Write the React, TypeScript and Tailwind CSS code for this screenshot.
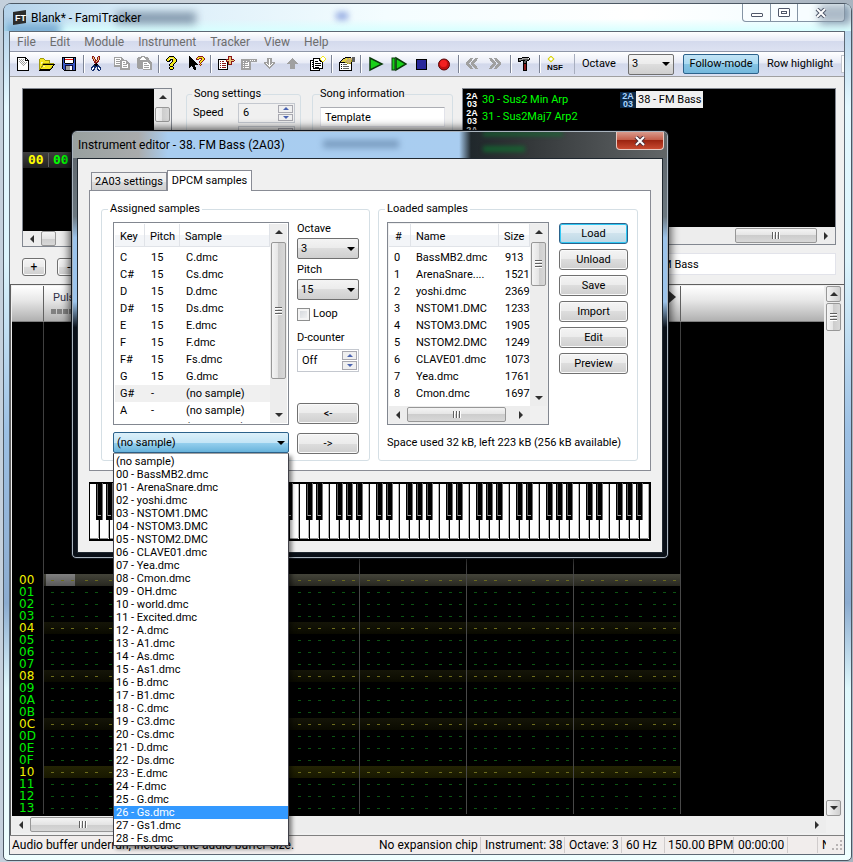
import { useState } from "react";
import type { ReactNode } from "react";
import clsx from "clsx";

const PALETTE: Record<string, string> = {
  k: "#000000",
  w: "#ffffff",
  g: "#a0a0a0",
  d: "#606060",
  y: "#f4e820",
  o: "#a09a10",
  c: "#f8f4b0",
  r: "#8c1818",
  R: "#e81818",
  b: "#102c6c",
  B: "#3858c8",
  n: "#10103c",
  t: "#c8b070",
  p: "#ecc878",
};

const ICONS: Record<string, string[]> = {
  new: [
    "",
    ".kkkkkkkkk",
    ".kwwwwwwwkk",
    ".kwgwgwgwkwk",
    ".kwwgwgwwkkkk",
    ".kwgwgwgwwwwk",
    ".kwwgwgwgwgwk",
    ".kwwwgwgwgwwk",
    ".kwwwwgwgwwwk",
    ".kwwwwwgwwwwk",
    ".kwwwwwwwwwwk",
    ".kwwwwwwwwwwk",
    ".kwwwwwwwwwwk",
    ".kwwwwwwwwwwk",
    ".kkkkkkkkkkkk",
  ],
  open: [
    "",
    "",
    ".oooo",
    "oyyyyo",
    "oyyyyyooooo",
    "oyyyyyyyyyo",
    "oyccyyyyyyo",
    "oycyooooooooooo",
    "oyyokkkkkkkkkkkk",
    "oyyoyyyyyyyyyyk",
    "oyooccyyyyyyyk",
    "oyoyyyyyyyyyok",
    "ooyyyyyyyyyok",
    "okkkkkkkkkkk",
    "kkkkkkkkkkk",
  ],
  save: [
    "",
    "kkkkkkkkkkkkkk",
    "kBkwwwwwwwwkBk",
    "kBkRRRRRRRRkBk",
    "kBkwwwwwwwwkBk",
    "kBkwwwwwwwwkBk",
    "kBkwwwwwwwwkBk",
    "kBBkkkkkkkkBBk",
    "kBBBBBBBBBBBBk",
    "kBBnnnnnnnnBBk",
    "kBBnggggwwnBBk",
    "kBBnggggwwnBBk",
    "kBBnggggwwnBBk",
    ".kBnggggwwnBBk",
    "..kkkkkkkkkkkk",
  ],
  cut: [
    ".rr....rr",
    ".rpr..rpr",
    ".rpr..rpr",
    "..rpr.rpr",
    "..rprrpr",
    "...rrprr",
    "...rrrr",
    "....rk",
    "...kkkk",
    "..bbkkbb",
    ".bbbbbbbb",
    "bbwbb.bwbb",
    "bwwb..bwwb",
    "bwbb..bbwb",
    ".bb....bb",
  ],
  copy: [
    "",
    "gggggggg",
    "gwwwwwwgg",
    "gwggggwggg",
    "gwwwwwggggggg",
    "gwggggggwwwwgg",
    "gwwwwwggwggwggg",
    "gwggggggwwwwgggg",
    "gwwwwwggwggggwgg",
    "ggggggggwwwwwwgg",
    "ggggggggwggggwgg",
    "......ggwwwwwwgg",
    "......gggggggggg",
    "......gggggggggg",
  ],
  paste: [
    "....gggg",
    ".ggggwwgggg",
    "ggggwwwwgggg",
    "gggwwwwwwggg",
    "ggggggggggggg",
    "gggggggggggggg",
    "ggggggwwwwwgggg",
    "ggggggwgggwwggg",
    "ggggggwwwwwwwgg",
    "ggggggwgggggwgg",
    "ggggggwwwwwwwgg",
    "ggggggwgggggwgg",
    ".gggggwwwwwwwgg",
    "......ggggggggg",
  ],
  help: [
    "...kkkkk",
    "..kyyyyyk",
    ".kyycccyyk",
    "kyyckkkyyyk",
    "kyykk.kyyyk",
    ".kkk..kyyyk",
    ".....kyyyk",
    "....kyyyk",
    "...kyyyk",
    "...kyyyk",
    "....kkk",
    "...kyyyk",
    "...kyyyk",
    "....kkk",
  ],
  context: [
    "k........rrrrr",
    "kk......ryyyyyr",
    "kkk....ryyrrryyr",
    "kkkk...rrr..ryyr",
    "kkkkk......ryyr",
    "kkkkkk....ryyr",
    "kkkkkkk...ryr",
    "kkkkkkkk...r",
    "kkkkkkkkk.ryr",
    "kkkkkk.....r",
    "kk.kkk",
    "k...kkk",
    "....kkk",
    ".....kk",
  ],
  add: [
    "..........rrrr",
    "..........rppr",
    "..........rppr",
    "kkkkkkkkrrrpprrr",
    "kwwwwwwwrpppppppr",
    "kwrwrrwwrrrpprrr",
    "kwwwwwwwwkrppr",
    "kwrwrrrrwkrppr",
    "kwwwwwwwwkrrrr",
    "kwrwrrrrwk",
    "kwwwwwwwwk",
    "kwrwrrrrwk",
    "kwwwwwwwwk",
    "kkkkkkkkkk",
  ],
  remove: [
    "",
    "",
    "",
    "gggggggggggggggg",
    "gggggggggwgwgwgg",
    "ggwggwgggggggggg",
    "gggggggwgg",
    "ggwgwwwwgg",
    "gggggggwgg",
    "ggwgwwwwgg",
    "gggggggggg",
    "ggwgwwwwgg",
    "gggggggggg",
    "gggggggggg",
  ],
  down: ["", "", "...ggggg", "...ggwgg", "...ggwgg", "...ggwgg", "gggggwggggg", "ggwggwggwgg", ".ggwgwgwgg", "..ggwwwgg", "...ggwgg", "....ggg", ".....g"],
  up: ["", "", ".....g", "....ggg", "...ggggg", "..ggggggg", ".ggggggggg", "ggggggggggg", "...ggggg", "...ggggg", "...ggggg", "...ggggg", "...ggggg"],
  create: [
    "............yy",
    "...........ywwy",
    "...kkkkkkkywwwwy",
    "...kwwwwwkywwwwy",
    "kkkkwwwwwkkywwy",
    "kwwkwkkkwwkkyy",
    "kwkkwwwwwwwwk",
    "kwwkwkkkkkkwk",
    "kwkkwwwwwwwwk",
    "kwwkwkkkkkkwk",
    "kwkkwwwwwwwwk",
    "kwwkwkkkkwwwk",
    "kwwkkkkkkkkkk",
    "kwwwwwwwwk",
    "kkkkkkkkkk",
  ],
  props: [
    "",
    "......kkkkkk.ddd",
    "....kktyttyttddd",
    "...ktytytttttddd",
    "..ktytytttttoddd",
    ".ktytyttttttoddd",
    "kkkkkkoottttk",
    "kwwwwwwwotook",
    "kwkwddddwwwwk",
    "kwwwwwwwwwwwk",
    "kwkwddddddwwk",
    "kwwwwwwwwwwwk",
    "kwkwddddddwwk",
    "kwwwwwwwwwwwk",
    "kkkkkkkkkkkkk",
  ],
  hammer: [
    "",
    "....kkkkkkk",
    "kkkkggggggwk",
    "kggggddddddk",
    "kddkkkkddkk",
    "kkk..kddk",
    ".....kddk",
    ".....kkkk",
    ".....krrk",
    ".....krrk",
    ".....krrk",
    ".....krrk",
    ".....krrk",
    ".....krrk",
    ".....kkkk",
  ],
  prev: ["", "", "....ggg..ggg", "...ggg..ggg", "..gggg.gggg", ".gggg.gggg", "gggg.gggg", "ggg..ggg", "gggg.gggg", ".gggg.gggg", "..gggg.gggg", "...ggg..ggg", "....ggg..ggg"],
  next: ["", "", "ggg..ggg", ".ggg..ggg", ".gggg.gggg", "..gggg.gggg", "...gggg.gggg", "....ggg..ggg", "...gggg.gggg", "..gggg.gggg", ".gggg.gggg", ".ggg..ggg", "ggg..ggg"],
};

const Sprite = ({ name }: { name: string }) => (
  <svg width="17" height="16" viewBox="0 0 17 16" shapeRendering="crispEdges" className="shrink-0" aria-hidden="true">
    {ICONS[name].map((row, y) =>
      [...row].map((ch, x) =>
        ch === "." ? null : <rect key={`${x}-${y}`} x={x} y={y} width="1" height="1" fill={PALETTE[ch]} />
      )
    )}
  </svg>
);

const ToolButton = ({ label, children }: { label: string; children: ReactNode }) => (
  <button aria-label={label} className="flex h-5 w-[23px] shrink-0 items-center pl-1">
    {children}
  </button>
);

const Separator = () => (
  <div className="flex h-[18px] w-[6px] shrink-0 justify-center">
    <div className="w-px bg-[#7c8394]" />
    <div className="w-px bg-white" />
  </div>
);

const Arrow = ({ dir, color = "#303030" }: { dir: "up" | "down" | "left" | "right"; color?: string }) => {
  const points = {
    up: "0,6 4,2 8,6",
    down: "0,2 8,2 4,6",
    left: "6,0 6,8 2,4",
    right: "2,0 6,4 2,8",
  }[dir];
  return (
    <svg width="8" height="8" viewBox="0 0 8 8" className="shrink-0" aria-hidden="true">
      <polygon points={points} fill={color} />
    </svg>
  );
};

const Grip = ({ vertical }: { vertical?: boolean }) => (
  <span className={clsx("flex gap-px", vertical && "flex-col")}>
    {[0, 1, 2].map((i) => (
      <span
        key={i}
        className={clsx(
          "border-[#606060]",
          vertical ? "h-[2px] w-[7px] border-t bg-white" : "h-[7px] w-[2px] border-l bg-white"
        )}
      />
    ))}
  </span>
);

const VScroll = ({ lead, thumb, grip, framed }: { lead?: string; thumb: string; grip?: boolean; framed?: boolean }) => (
  <div className="flex w-[17px] shrink-0 flex-col items-center bg-[#ededed]">
    <div
      className={clsx(
        "flex h-4 w-[15px] shrink-0 items-center justify-center",
        framed && "rounded-[2px] border border-[#979797] bg-[linear-gradient(90deg,#f4f4f4,#cfcfcf)]"
      )}
    >
      <Arrow dir="up" />
    </div>
    <div className={clsx("shrink-0", lead)} />
    <div
      className={clsx(
        "flex w-[15px] shrink-0 items-center justify-center rounded-[2px] border border-[#979797] bg-[linear-gradient(90deg,#f4f4f4,#e4e4e4_50%,#cdcdcd_50%,#d8d8d8)]",
        thumb
      )}
    >
      {grip && <Grip vertical />}
    </div>
    <div className="flex-1" />
    <div
      className={clsx(
        "flex h-4 w-[15px] shrink-0 items-center justify-center",
        framed && "rounded-[2px] border border-[#979797] bg-[linear-gradient(90deg,#f4f4f4,#cfcfcf)]"
      )}
    >
      <Arrow dir="down" />
    </div>
  </div>
);

const HScroll = ({ thumb, grip, end }: { thumb: string; grip?: boolean; end?: boolean }) => (
  <div className="flex h-[17px] min-w-0 flex-1 items-center bg-[#ededed]">
    <div className="flex w-[18px] shrink-0 justify-center">
      <Arrow dir="left" />
    </div>
    {end && <div className="flex-1" />}
    <div
      className={clsx(
        "flex h-[15px] shrink-0 items-center justify-center rounded-[2px] border border-[#979797] bg-[linear-gradient(#f4f4f4,#e4e4e4_50%,#cdcdcd_50%,#d8d8d8)]",
        thumb
      )}
    >
      {grip && <Grip />}
    </div>
    {!end && <div className="flex-1" />}
    <div className="flex w-[18px] shrink-0 justify-center">
      <Arrow dir="right" />
    </div>
  </div>
);

const PushButton = ({ label, primary, className = "h-[21px]" }: { label: string; primary?: boolean; className?: string }) => (
  <button
    className={clsx(
      "rounded-[3px] border text-center",
      primary
        ? "border-[#2c628b] bg-[linear-gradient(#eaf4f8,#e0eef5_50%,#cfe3ed_50%,#bcd8e6)] shadow-[inset_0_0_0_1px_#2fc8f4]"
        : "border-[#707070] bg-[linear-gradient(#f4f4f4,#ebebeb_50%,#dddddd_50%,#cfcfcf)] shadow-[inset_0_0_0_1px_#fafafa]",
      className
    )}
  >
    {label}
  </button>
);

const DropDown = ({ id, value, className, hot, label }: { id: string; value: string; className?: string; hot?: boolean; label?: string }) => (
  <div className={clsx("grid h-[21px] items-center", className)}>
    <select
      id={id}
      aria-label={label}
      defaultValue={value}
      className={clsx(
        "col-start-1 row-start-1 h-[21px] w-full appearance-none rounded-[2px] border pl-[3px] outline-none",
        hot
          ? "border-[#2c628b] bg-[linear-gradient(#dcf0fa,#c4e5f6_50%,#98d1ef_50%,#68b3db)]"
          : "border-[#707070] bg-[linear-gradient(#f4f4f4,#ebebeb_50%,#dddddd_50%,#cfcfcf)]"
      )}
    >
      <option>{value}</option>
    </select>
    <span className="pointer-events-none col-start-1 row-start-1 mr-1 flex justify-self-end">
      <Arrow dir="down" color="#000000" />
    </span>
  </div>
);

const Spinner = ({ id, value, label, className }: { id: string; value: string; label?: string; className?: string }) => (
  <div className={clsx("flex border border-[#c4c8cf]", className)}>
    <input id={id} aria-label={label} defaultValue={value} className="w-full min-w-0 flex-1 bg-transparent pl-1 outline-none" />
    <div className="flex w-[17px] shrink-0 flex-col gap-px p-px">
      <button aria-label="Increase" className="flex flex-1 items-center justify-center border border-[#a8a8b0] bg-[#f0f0f0]">
        <svg width="6" height="3" viewBox="0 0 6 3" aria-hidden="true">
          <polygon points="0,3 3,0 6,3" fill="#4a63b0" />
        </svg>
      </button>
      <button aria-label="Decrease" className="flex flex-1 items-center justify-center border border-[#a8a8b0] bg-[#f0f0f0]">
        <svg width="6" height="3" viewBox="0 0 6 3" aria-hidden="true">
          <polygon points="0,0 6,0 3,3" fill="#4a63b0" />
        </svg>
      </button>
    </div>
  </div>
);

const TitleBar = () => (
  <header className="relative flex h-[27px] shrink-0 overflow-hidden rounded-t-md bg-[linear-gradient(90deg,#b4d2ea,#d8ecf8_15%,#f4fdff_45%,#ffffff_75%,#f0fcff)] pr-[6px]">
    <div className="absolute inset-x-0 bottom-0 h-3 bg-[linear-gradient(#ddffff00,#d8ffff)]" />
    <div className="absolute left-28 top-2 h-3 w-20 bg-[#49617c] opacity-60 blur-[4px]" />
    <div className="absolute left-[332px] top-2 h-2 w-3 bg-[#5a78d0] opacity-60 blur-[3px]" />
    <div className="absolute -bottom-2 left-0 h-4 w-14 bg-[#3c78b8] opacity-60 blur-[4px]" />
    <div className="absolute right-0 top-0 h-5 w-8 bg-[#3c5878] opacity-60 blur-[4px]" />
    <div className="relative flex flex-1 items-center gap-1 pl-[9px] text-xs">
      <svg width="14" height="15" viewBox="0 0 14 15" aria-hidden="true">
        <polygon points="0,2 13,0 13,13 0,15" fill="#2c2c2c" />
        <text x="2" y="11" fill="#ffffff" fontSize="9" fontWeight="bold" fontFamily="Liberation Sans">
          FT
        </text>
      </svg>
      <span>Blank* - FamiTracker</span>
    </div>
    <div className="relative flex h-[18px] w-[103px] rounded-b-[4px] border border-t-0 border-[#8494a4] bg-[#ffffff55]">
      <button aria-label="Minimize" className="flex w-[28px] items-center justify-center border-r border-[#8494a4]">
        <span className="mt-1 h-1 w-3 rounded-[1px] border border-[#50586a] bg-white" />
      </button>
      <button aria-label="Maximize" className="flex w-[27px] items-center justify-center border-r border-[#8494a4]">
        <span className="flex h-[9px] w-3 items-center justify-center rounded-[1px] border border-[#50586a] bg-white">
          <span className="h-[3px] w-[6px] border border-[#50586a]" />
        </span>
      </button>
      <button aria-label="Close" className="flex flex-1 items-center justify-center">
        <svg width="12" height="10" viewBox="0 0 12 10" aria-hidden="true">
          <path d="M2 1 L10 9 M10 1 L2 9" stroke="#50586a" strokeWidth="4" />
          <path d="M2 1 L10 9 M10 1 L2 9" stroke="#ffffff" strokeWidth="2" />
        </svg>
      </button>
    </div>
  </header>
);

const MENU = ["File", "Edit", "Module", "Instrument", "Tracker", "View", "Help"];

const MenuBar = () => (
  <nav className="flex h-[19px] shrink-0 items-center bg-[linear-gradient(#ffffff,#e8ebf6_45%,#d4daed_50%,#dde2f2)] text-xs text-[#6d6d6d]">
    {MENU.map((item) => (
      <button key={item} className="px-[7px]">
        {item}
      </button>
    ))}
  </nav>
);

const Toolbar = () => {
  const [follow, setFollow] = useState(true);
  return (
    <div className="flex h-[26px] shrink-0 items-center overflow-hidden whitespace-nowrap border-y border-t-[#8f96a8] border-b-[#a0a0a0] bg-[linear-gradient(#ffffff,#e8ebf6_45%,#d2d8eb_50%,#dbe0f0)] pl-[2px]">
      <ToolButton label="New"><Sprite name="new" /></ToolButton>
      <ToolButton label="Open"><Sprite name="open" /></ToolButton>
      <ToolButton label="Save"><Sprite name="save" /></ToolButton>
      <Separator />
      <ToolButton label="Cut"><Sprite name="cut" /></ToolButton>
      <ToolButton label="Copy"><Sprite name="copy" /></ToolButton>
      <ToolButton label="Paste"><Sprite name="paste" /></ToolButton>
      <Separator />
      <ToolButton label="Help"><Sprite name="help" /></ToolButton>
      <ToolButton label="Context help"><Sprite name="context" /></ToolButton>
      <Separator />
      <ToolButton label="Add instrument"><Sprite name="add" /></ToolButton>
      <ToolButton label="Remove instrument"><Sprite name="remove" /></ToolButton>
      <ToolButton label="Move down"><Sprite name="down" /></ToolButton>
      <ToolButton label="Move up"><Sprite name="up" /></ToolButton>
      <ToolButton label="Create"><Sprite name="create" /></ToolButton>
      <Separator />
      <ToolButton label="Module properties"><Sprite name="props" /></ToolButton>
      <Separator />
      <ToolButton label="Play">
        <svg width="16" height="16" viewBox="0 0 16 16" aria-hidden="true">
          <polygon points="2,2 14,8 2,14" fill="#18d018" stroke="#0a3a0a" strokeWidth="1.500" />
        </svg>
      </ToolButton>
      <ToolButton label="Play pattern">
        <svg width="16" height="16" viewBox="0 0 16 16" aria-hidden="true">
          <rect x="1" y="2" width="3" height="12" fill="#18d018" stroke="#0a3a0a" />
          <polygon points="5,2 15,8 5,14" fill="#18d018" stroke="#0a3a0a" strokeWidth="1.500" />
        </svg>
      </ToolButton>
      <ToolButton label="Stop">
        <svg width="16" height="16" viewBox="0 0 16 16" shapeRendering="crispEdges" aria-hidden="true">
          <rect x="2" y="3" width="11" height="11" fill="#000000" />
          <rect x="3" y="4" width="9" height="9" fill="#28289c" />
        </svg>
      </ToolButton>
      <ToolButton label="Record">
        <svg width="16" height="16" viewBox="0 0 16 16" aria-hidden="true">
          <circle cx="7" cy="8.500" r="5.500" fill="#c01010" stroke="#5a0808" />
          <circle cx="6.500" cy="7.500" r="3.500" fill="#f42020" />
        </svg>
      </ToolButton>
      <Separator />
      <ToolButton label="Previous song"><Sprite name="prev" /></ToolButton>
      <ToolButton label="Next song"><Sprite name="next" /></ToolButton>
      <Separator />
      <ToolButton label="Settings"><Sprite name="hammer" /></ToolButton>
      <Separator />
      <ToolButton label="Export NSF">
        <svg width="18" height="16" viewBox="0 0 18 16" className="shrink-0" aria-hidden="true">
          <rect x="2" y="1" width="4" height="4" transform="rotate(45 4 3)" fill="#ffffff" stroke="#d8d000" />
          <text x="0" y="14" fontSize="8" fontWeight="bold" fontFamily="Liberation Sans">
            NSF
          </text>
        </svg>
      </ToolButton>
      <div className="ml-2 h-5 w-px shrink-0 bg-[#a8aebf]" />
      <label htmlFor="edit-octave" className="ml-[7px] w-[46px] shrink-0">
        Octave
      </label>
      <DropDown id="edit-octave" value="3" className="w-[46px] shrink-0" />
      <button
        onClick={() => setFollow(!follow)}
        className={clsx(
          "ml-[9px] h-5 w-[76px] shrink-0 rounded-[2px] border border-[#2c628b]",
          follow ? "bg-[linear-gradient(#c2e4f6,#aadaf2_50%,#86c4e4_50%,#74b8dc)]" : "bg-[#ebebeb]"
        )}
      >
        Follow-mode
      </button>
      <label htmlFor="row-highlight" className="ml-2 w-[74px] shrink-0">
        Row highlight
      </label>
      <input id="row-highlight" className="h-[18px] w-10 shrink-0 border border-[#c4c8cf] bg-white" />
    </div>
  );
};

const InstrumentIcon = ({ active }: { active?: boolean }) => (
  <span
    className={clsx(
      "flex h-4 w-4 shrink-0 flex-col items-center font-['Liberation_Sans',sans-serif] text-[9px] font-bold leading-[8px]",
      active ? "bg-[#0c2a48] text-[#a8d4ff]" : "text-white"
    )}
  >
    <span>2A</span>
    <span>03</span>
  </span>
);

const ControlPanel = () => (
  <section className="flex h-[207px] shrink-0 items-start overflow-hidden bg-[#f0f0f0] pl-3 pr-2 pt-[11px]">
    <div className="flex w-[150px] shrink-0 flex-col">
      <div className="flex flex-col border border-[#828790]">
        <div className="flex h-[142px]">
          <div className="flex flex-1 flex-col bg-black pt-[63px]">
            <div className="flex h-4 items-center bg-[linear-gradient(#404040,#202020)] font-['DejaVu_Sans_Mono',monospace] text-[13px] font-bold">
              <span className="w-[26px] border-r border-[#606060] pl-[5px] text-[#ffff00]">00</span>
              <span className="pl-1 text-[#00ff00]">00</span>
            </div>
          </div>
          <VScroll thumb="h-[15px]" lead="h-[2px]" />
        </div>
        <HScroll thumb="w-[15px]" />
      </div>
      <div className="flex gap-[11px] pt-[11px]">
        <PushButton label="+" className="h-[18px] w-6 text-xs leading-[15px]" />
        <PushButton label="-" className="h-[18px] w-6 text-xs leading-[15px]" />
      </div>
    </div>

    <fieldset className="-mt-px ml-[14px] h-[140px] w-[115px] shrink-0 rounded-[3px] border border-[#d5dfe5] px-[5px] pb-2">
      <legend className="px-[2px] leading-[14px]">Song settings</legend>
      <div className="flex items-center pt-[2px]">
        <label htmlFor="speed" className="flex-1 pl-px">
          Speed
        </label>
        <Spinner id="speed" value="6" className="h-5 w-[57px]" />
      </div>
      <Spinner id="tempo" value="" label="Tempo" className="ml-auto mt-[3px] h-5 w-[57px]" />
    </fieldset>

    <fieldset className="-mt-px ml-[11px] h-[140px] w-[141px] shrink-0 rounded-[3px] border border-[#d5dfe5] px-[7px] pb-2">
      <legend className="leading-[14px]">Song information</legend>
      <input aria-label="Song title" defaultValue="Template" className="mt-[6px] h-5 w-full border border-[#e2e3ea] border-t-[#abadb3] bg-white pl-1 outline-none" />
    </fieldset>

    <div className="ml-[9px] flex min-w-0 flex-1 flex-col">
      <div className="border border-[#828790]">
        <div className="flex h-[138px] overflow-hidden bg-black pl-px pt-[2px] text-[#00ff00]">
          <ul className="w-[156px] shrink-0 pr-px">
            {["30 - Sus2 Min Arp", "31 - Sus2Maj7 Arp2", ""].map((name) => (
              <li key={name} className="flex h-[17px] items-center gap-[2px]">
                <InstrumentIcon />
                <span>{name}</span>
              </li>
            ))}
          </ul>
          <ul>
            <li className="flex h-[17px] items-center">
              <InstrumentIcon active />
              <span className="h-[17px] bg-[#f0f0f0] px-[2px] leading-[17px] text-black">38 - FM Bass</span>
            </li>
          </ul>
        </div>
        <HScroll thumb="w-[82px]" grip end />
      </div>
      <input
        aria-label="Instrument name"
        defaultValue="FM Bass"
        className="mt-2 h-[22px] w-full border border-[#e2e3ea] bg-white pl-[193px] outline-none"
      />
    </div>
  </section>
);

// first cell group is the note, then instrument, volume and one group per effect column
const CHANNELS = [
  { name: "Pulse 1", width: "w-[175px]", cells: [3, 2, 1, 3, 3, 3] },
  { name: "Pulse 2", width: "w-[141px]", cells: [3, 2, 1, 3, 3] },
  { name: "Triangle", width: "w-[107px]", cells: [3, 2, 1, 3] },
  { name: "Noise", width: "w-[107px]", cells: [3, 2, 1, 3] },
  { name: "DPCM", width: "w-[107px]", cells: [3, 2, 1, 3] },
];

const PatternRow = ({ row }: { row: number }) => {
  const major = row % 16 === 0;
  const beat = row % 4 === 0;
  return (
    <div className="flex h-3 shrink-0">
      <span
        className={clsx(
          "w-8 shrink-0 border-r border-[#404040] pl-[7px] font-['DejaVu_Sans',sans-serif] text-[12px] leading-3",
          beat ? "text-[#f0f000]" : "text-[#00f000]"
        )}
      >
        {row.toString(16).toUpperCase().padStart(2, "0")}
      </span>
      {CHANNELS.map((channel, index) => (
        <div
          key={channel.name}
          className={clsx(
            "flex shrink-0 items-center gap-1 overflow-hidden border-r border-[#484848]",
            channel.width,
            row === 0 && "bg-[linear-gradient(#44443a,#282820)]",
            row !== 0 && major && "bg-[linear-gradient(#242404,#181800)]",
            beat && !major && "bg-[linear-gradient(#151508,#0a0a00)]"
          )}
        >
          {channel.cells.map((count, group) => (
            <span
              key={group}
              className={clsx(
                "flex h-3 shrink-0 items-center",
                group === 0 &&
                  (row === 0 && index === 0
                    ? "ml-[2px] mr-[6px] w-[29px] bg-[linear-gradient(#808080,#585858)] pl-[5px]"
                    : "pl-[7px]")
              )}
            >
              {Array.from({ length: count }, (_, i) => (
                <span key={i} className="w-[10px] shrink-0">
                  <span className={clsx("block h-px w-[3px]", beat ? "bg-[#6c6c1c]" : "bg-[#0c5412]")} />
                </span>
              ))}
            </span>
          ))}
        </div>
      ))}
    </div>
  );
};

const PatternEditor = () => (
  <section className="flex min-h-0 flex-1 flex-col border-l border-t border-[#606060] bg-[#f0f0f0] pb-[2px] pl-px pr-[2px] pt-px">
    <div className="flex min-h-0 flex-1">
      <div className="flex min-w-0 flex-1 flex-col overflow-hidden bg-black">
        <div className="flex h-9 shrink-0 border-b border-[#808080] bg-[linear-gradient(#ffffff,#e8e8e8_40%,#b0b0b0)] text-[#303048]">
          <div className="w-8 shrink-0 border-r border-[#606060]" />
          {CHANNELS.map((channel, i) => (
            <div key={channel.name} className={clsx("flex shrink-0 flex-col border-r border-[#606060] pt-[5px]", channel.width)}>
              {i === 0 && (
                <>
                  <span className="pl-[9px] leading-[14px]">{channel.name}</span>
                  <span className="flex gap-px pl-[7px] pt-1">
                    {[0, 1, 2, 3].map((n) => (
                      <span key={n} className="h-[5px] w-[5px] bg-[#808080]" />
                    ))}
                  </span>
                </>
              )}
              {i === 4 && (
                <svg width="7" height="12" viewBox="0 0 7 12" className="ml-auto mr-1" aria-hidden="true">
                  <polygon points="0,0 7,6 0,12" fill="#303030" />
                </svg>
              )}
            </div>
          ))}
        </div>
        <div className="flex min-h-0 flex-1">
          <div className="w-8 shrink-0 border-r border-[#404040]" />
          {CHANNELS.map((channel) => (
            <div key={channel.name} className={clsx("shrink-0 border-r border-[#404040]", channel.width)} />
          ))}
        </div>
        {Array.from({ length: 20 }, (_, row) => (
          <PatternRow key={row} row={row} />
        ))}
        <div className="h-[2px] shrink-0" />
      </div>
      <div className="flex pl-px">
        <VScroll thumb="h-7" lead="h-px" grip framed />
      </div>
    </div>
    <div className="flex shrink-0 pr-4">
      <HScroll thumb="w-[106px]" grip />
    </div>
  </section>
);

const StatusBar = () => (
  <footer className="flex h-[19px] shrink-0 items-center overflow-hidden whitespace-nowrap border-t border-[#808080] bg-[#f1edec] text-xs">
    <span className="min-w-0 flex-1 overflow-hidden pl-[2px]">Audio buffer underrun, increase the audio buffer size.</span>
    <span className="w-[102px] shrink-0 border-r border-[#d0cccc]">No expansion chip</span>
    <span className="w-[84px] shrink-0 border-r border-[#d0cccc] pl-1">Instrument: 38</span>
    <span className="w-[57px] shrink-0 border-r border-[#d0cccc] pl-1">Octave: 3</span>
    <span className="w-[43px] shrink-0 border-r border-[#d0cccc] pl-1">60 Hz</span>
    <span className="w-[69px] shrink-0 border-r border-[#d0cccc] pl-[3px]">150.00 BPM</span>
    <span className="w-[54px] shrink-0 border-r border-[#d0cccc] pl-1">00:00:00</span>
    <span className="h-4 w-[30px] shrink-0 border-r border-[#d0cccc]" />
    <span className="w-2 shrink-0 overflow-hidden pl-1">N</span>
    <svg width="18" height="12" viewBox="0 0 18 12" className="shrink-0" aria-hidden="true">
      <path d="M14 1h2v2h-2z M14 5h2v2h-2z M10 5h2v2h-2z M14 9h2v2h-2z M10 9h2v2h-2z M6 9h2v2h-2z" fill="#b8b4b4" />
    </svg>
  </footer>
);

const ASSIGNED = [
  ["C", "15", "C.dmc"],
  ["C#", "15", "Cs.dmc"],
  ["D", "15", "D.dmc"],
  ["D#", "15", "Ds.dmc"],
  ["E", "15", "E.dmc"],
  ["F", "15", "F.dmc"],
  ["F#", "15", "Fs.dmc"],
  ["G", "15", "G.dmc"],
  ["G#", "-", "(no sample)"],
  ["A", "-", "(no sample)"],
  ["A#", "-", "(no sample)"],
];

const LOADED = [
  ["BassMB2.dmc", "913"],
  ["ArenaSnare....", "1521"],
  ["yoshi.dmc", "2369"],
  ["NSTOM1.DMC", "1233"],
  ["NSTOM3.DMC", "1905"],
  ["NSTOM2.DMC", "1249"],
  ["CLAVE01.dmc", "1073"],
  ["Yea.dmc", "1761"],
  ["Cmon.dmc", "1697"],
];

const SAMPLES = [
  "BassMB2.dmc", "ArenaSnare.dmc", "yoshi.dmc", "NSTOM1.DMC", "NSTOM3.DMC", "NSTOM2.DMC", "CLAVE01.dmc", "Yea.dmc",
  "Cmon.dmc", "OH.dmc", "world.dmc", "Excited.dmc", "A.dmc", "A1.dmc", "As.dmc", "As1.dmc", "B.dmc", "B1.dmc", "C.dmc",
  "C3.dmc", "Cs.dmc", "D.dmc", "Ds.dmc", "E.dmc", "F.dmc", "G.dmc", "Gs.dmc", "Gs1.dmc", "Fs.dmc",
];

const SampleDropDown = () => {
  const [hovered, setHovered] = useState(27);
  const options = ["(no sample)", ...SAMPLES.map((s, i) => `${String(i).padStart(2, "0")} - ${s}`)];
  return (
    <div className="relative mt-[7px]">
      <DropDown id="sample" value="(no sample)" label="Sample" hot className="w-full" />
      <ul
        role="listbox"
        className="absolute inset-x-0 top-full z-10 border border-[#404048] border-t-[#a0a0a0] bg-white pt-px shadow-[3px_3px_4px_rgba(0,0,0,0.45)]"
      >
        {options.map((option, i) => (
          <li
            key={option}
            role="option"
            aria-selected={i === hovered}
            onMouseEnter={() => setHovered(i)}
            className={clsx("h-[13px] pl-[2px] leading-[13px]", i === hovered && "bg-[#3399ff] text-white")}
          >
            {option}
          </li>
        ))}
      </ul>
    </div>
  );
};

const headCell = "border-b border-r border-[#e0e3e8] bg-[linear-gradient(#ffffff_50%,#f3f5f8_50%)] pt-[3px] text-left font-normal";

const AssignedSamples = () => (
  <fieldset className="flex h-[259px] w-[269px] shrink-0 rounded-[3px] border border-[#d5dfe5] pl-[11px]">
    <legend className="-ml-[5px] px-[2px] leading-[14px]">Assigned samples</legend>
    <div className="flex gap-2 pt-[6px]">
      <div className="w-44">
        <div className="flex h-[203px] border border-[#828790] p-px">
          <div className="min-w-0 flex-1 overflow-hidden">
            <table className="w-full table-fixed border-separate border-spacing-0">
              <thead>
                <tr className="h-[23px]">
                  <th className={clsx(headCell, "w-[30px] pl-[5px]")}>Key</th>
                  <th className={clsx(headCell, "w-[35px] pl-[5px]")}>Pitch</th>
                  <th className={clsx(headCell, "pl-[5px]")}>Sample</th>
                </tr>
                <tr className="h-[2px]" />
              </thead>
              <tbody>
                {ASSIGNED.map(([key, pitch, sample]) => (
                  <tr key={key} className={clsx("h-[17px]", key === "G#" && "bg-[#f0f0f0]")}>
                    <td className="pl-[5px]">{key}</td>
                    <td className="pl-[6px]">{pitch}</td>
                    <td className="pl-[6px]">{sample}</td>
                  </tr>
                ))}
              </tbody>
            </table>
          </div>
          <VScroll thumb="h-[137px]" lead="h-[2px]" grip />
        </div>
        <SampleDropDown />
      </div>
      <div className="flex w-[62px] flex-col">
        <label htmlFor="octave" className="leading-[14px]">
          Octave
        </label>
        <DropDown id="octave" value="3" className="mt-[2px] w-full" />
        <label htmlFor="pitch" className="mt-1 leading-[14px]">
          Pitch
        </label>
        <DropDown id="pitch" value="15" className="mt-[2px] w-full" />
        <label className="mt-[7px] flex items-center gap-[3px] leading-[14px]">
          <input
            type="checkbox"
            className="h-[13px] w-[13px] appearance-none border border-[#8e8f8f] bg-[linear-gradient(135deg,#cfd3d8,#f6f6f6)] shadow-[inset_0_0_0_2px_#f4f4f4]"
          />
          Loop
        </label>
        <label htmlFor="d-counter" className="mt-[10px] leading-[14px]">
          D-counter
        </label>
        <Spinner id="d-counter" value="Off" className="mt-1 h-[23px] w-full" />
        <PushButton label="<-" className="mt-[31px] h-[21px]" />
        <PushButton label="->" className="mt-[9px] h-[21px]" />
      </div>
    </div>
  </fieldset>
);

const LoadedSamples = () => (
  <fieldset className="flex h-[259px] w-[260px] shrink-0 rounded-[3px] border border-[#d5dfe5] pl-2">
    <legend className="-ml-[2px] px-[2px] leading-[14px]">Loaded samples</legend>
    <div className="flex flex-col pt-[6px]">
      <div className="flex gap-[10px]">
        <div className="flex h-[203px] w-[162px] flex-col border border-[#828790] bg-[#f0f0f0] p-px">
          <div className="flex min-h-0 flex-1">
            <div className="min-w-0 flex-1 overflow-hidden bg-white">
              <table className="w-full table-fixed border-separate border-spacing-0">
                <thead>
                  <tr className="h-[23px]">
                    <th className={clsx(headCell, "w-[22px] pl-[6px]")}>#</th>
                    <th className={clsx(headCell, "w-[88px] pl-[5px]")}>Name</th>
                    <th className={clsx(headCell, "pl-[5px]")}>Size</th>
                  </tr>
                  <tr className="h-[2px]" />
                </thead>
                <tbody>
                  {LOADED.map(([name, size], i) => (
                    <tr key={name} className="h-[17px] whitespace-nowrap">
                      <td className="pl-[5px]">{i}</td>
                      <td className="pl-[5px]">{name}</td>
                      <td className="pl-[6px]">{size}</td>
                    </tr>
                  ))}
                </tbody>
              </table>
            </div>
            <VScroll thumb="h-11" lead="h-[2px]" grip />
          </div>
          <div className="flex pr-[17px]">
            <HScroll thumb="w-[99px]" grip />
          </div>
        </div>
        <div className="flex w-[69px] flex-col gap-[5px] pt-px">
          <PushButton label="Load" primary />
          <PushButton label="Unload" />
          <PushButton label="Save" />
          <PushButton label="Import" />
          <PushButton label="Edit" />
          <PushButton label="Preview" />
        </div>
      </div>
      <p className="mt-[11px] whitespace-nowrap leading-[14px]">Space used 32 kB, left 223 kB (256 kB available)</p>
    </div>
  </fieldset>
);

const Keyboard = () => (
  <svg viewBox="0 0 562 59" className="mt-[11px] block w-full" shapeRendering="crispEdges" aria-label="Keyboard">
    <rect width="562" height="59" fill="#000000" />
    {Array.from({ length: 56 }, (_, i) => (
      <g key={i}>
        <rect x={1 + i * 10} y="2" width="9" height="55" fill="#ffffff" />
        <rect x={9 + i * 10} y="2" width="1" height="54" fill="#b0b0b0" />
        <rect x={1 + i * 10} y="56" width="8" height="1" fill="#909090" />
      </g>
    ))}
    {Array.from({ length: 56 }, (_, i) =>
      i % 7 === 2 || i % 7 === 6 ? null : (
        <g key={i}>
          <rect x={7 + i * 10} y="1" width="7" height="37" fill="#000000" />
          <rect x={8 + i * 10} y="2" width="1" height="32" fill="#606060" />
          <rect x={9 + i * 10} y="33" width="3" height="1" fill="#a0a0a0" />
          <rect x={13 + i * 10} y="1" width="1" height="37" fill="#707070" />
        </g>
      )
    )}
  </svg>
);

const InstrumentEditor = () => (
  <div
    role="dialog"
    aria-label="Instrument editor"
    className="absolute left-[71px] top-[130px] flex w-[598px] flex-col rounded-t-[6px] rounded-b-[5px] border border-[#10151c] bg-[linear-gradient(#5a6066,#6c7880_20%,#9cc4ec_25%,#9cc4ec_40%,#0a1018_46%)] px-[5px] pb-[5px] shadow-[inset_0_0_0_1px_#aab4be,0_0_9px_2px_rgba(0,0,0,0.65)]"
  >
    <div className="relative -mx-1 mt-px flex h-[26px] shrink-0 overflow-hidden rounded-t-[4px] bg-[linear-gradient(90deg,#98a09f,#a9abac_11%,#a8cdf0_16%,#a9cdf0_65%,#20282c_67%,#2e3234_74%,#626668)]">
      <div className="absolute left-[250px] top-2 h-2 w-[76px] bg-[#4c6c90] opacity-50 blur-[3px]" />
      <div className="absolute left-[410px] top-0 h-1 w-20 bg-[#107030] opacity-70 blur-[2px]" />
      <div className="absolute left-[410px] top-[14px] h-[6px] w-[42px] bg-[#107030] opacity-70 blur-[2px]" />
      <h2 className="relative flex-1 self-center pl-[5px] text-xs">
        Instrument editor - 38. FM Bass (2A03)
      </h2>
      <button
        aria-label="Close"
        className="relative mr-[3px] flex h-[18px] w-12 items-center justify-center rounded-b-[4px] border border-t-0 border-[#e8c8c0] bg-[linear-gradient(#d99a8c,#c4604c_45%,#9c2410_50%,#c84a30)]"
      >
        <svg width="12" height="10" viewBox="0 0 12 10" aria-hidden="true">
          <path d="M2 1 L10 9 M10 1 L2 9" stroke="#50303a" strokeWidth="4" />
          <path d="M2 1 L10 9 M10 1 L2 9" stroke="#ffffff" strokeWidth="2" />
        </svg>
      </button>
    </div>
    <div className="flex flex-col border border-[#202830] bg-[#f0f0f0] px-[11px] pb-[11px] pt-[11px]">
      <div className="flex items-end pl-[2px]" role="tablist">
        <button role="tab" className="h-[18px] w-[76px] whitespace-nowrap border border-b-0 border-[#898c95] bg-[linear-gradient(#f2f2f2,#ebebeb_50%,#dddddd_50%,#cfcfcf)]">
          2A03 settings
        </button>
        <button role="tab" aria-selected="true" className="relative -mb-px h-[21px] w-[85px] whitespace-nowrap border border-b-0 border-[#898c95] bg-white">
          DPCM samples
        </button>
      </div>
      <div className="flex gap-2 border border-[#898c95] bg-white px-[11px] pb-[9px] pt-[11px]">
        <AssignedSamples />
        <LoadedSamples />
      </div>
      <Keyboard />
    </div>
  </div>
);

const App = () => {
  return (
    <div className="relative flex min-h-screen bg-[linear-gradient(90deg,#c4d0dc,#d4d8dc_50%,#a8b4c0)] pb-px pl-[3px] pr-px pt-[3px] font-['Roboto','Open_Sans',sans-serif] text-[11px] leading-[14px] text-black">
      <div className="flex min-w-0 flex-1 flex-col rounded-t-lg rounded-b-[5px] border border-[#4c5864] bg-[linear-gradient(#a8c8e4,#e4f8ff_12%,#dcf4fc_30%,#9cc0e4_50%,#8cacd0_70%,#dff8fc_80%,#f0ffff)] pb-[5px]">
        <TitleBar />
        <div className="ml-[5px] mr-[6px] flex min-h-0 flex-1 flex-col border border-[#5c6874]">
          <MenuBar />
          <Toolbar />
          <ControlPanel />
          <PatternEditor />
          <StatusBar />
        </div>
      </div>
      <InstrumentEditor />
    </div>
  );
};

export default App;
